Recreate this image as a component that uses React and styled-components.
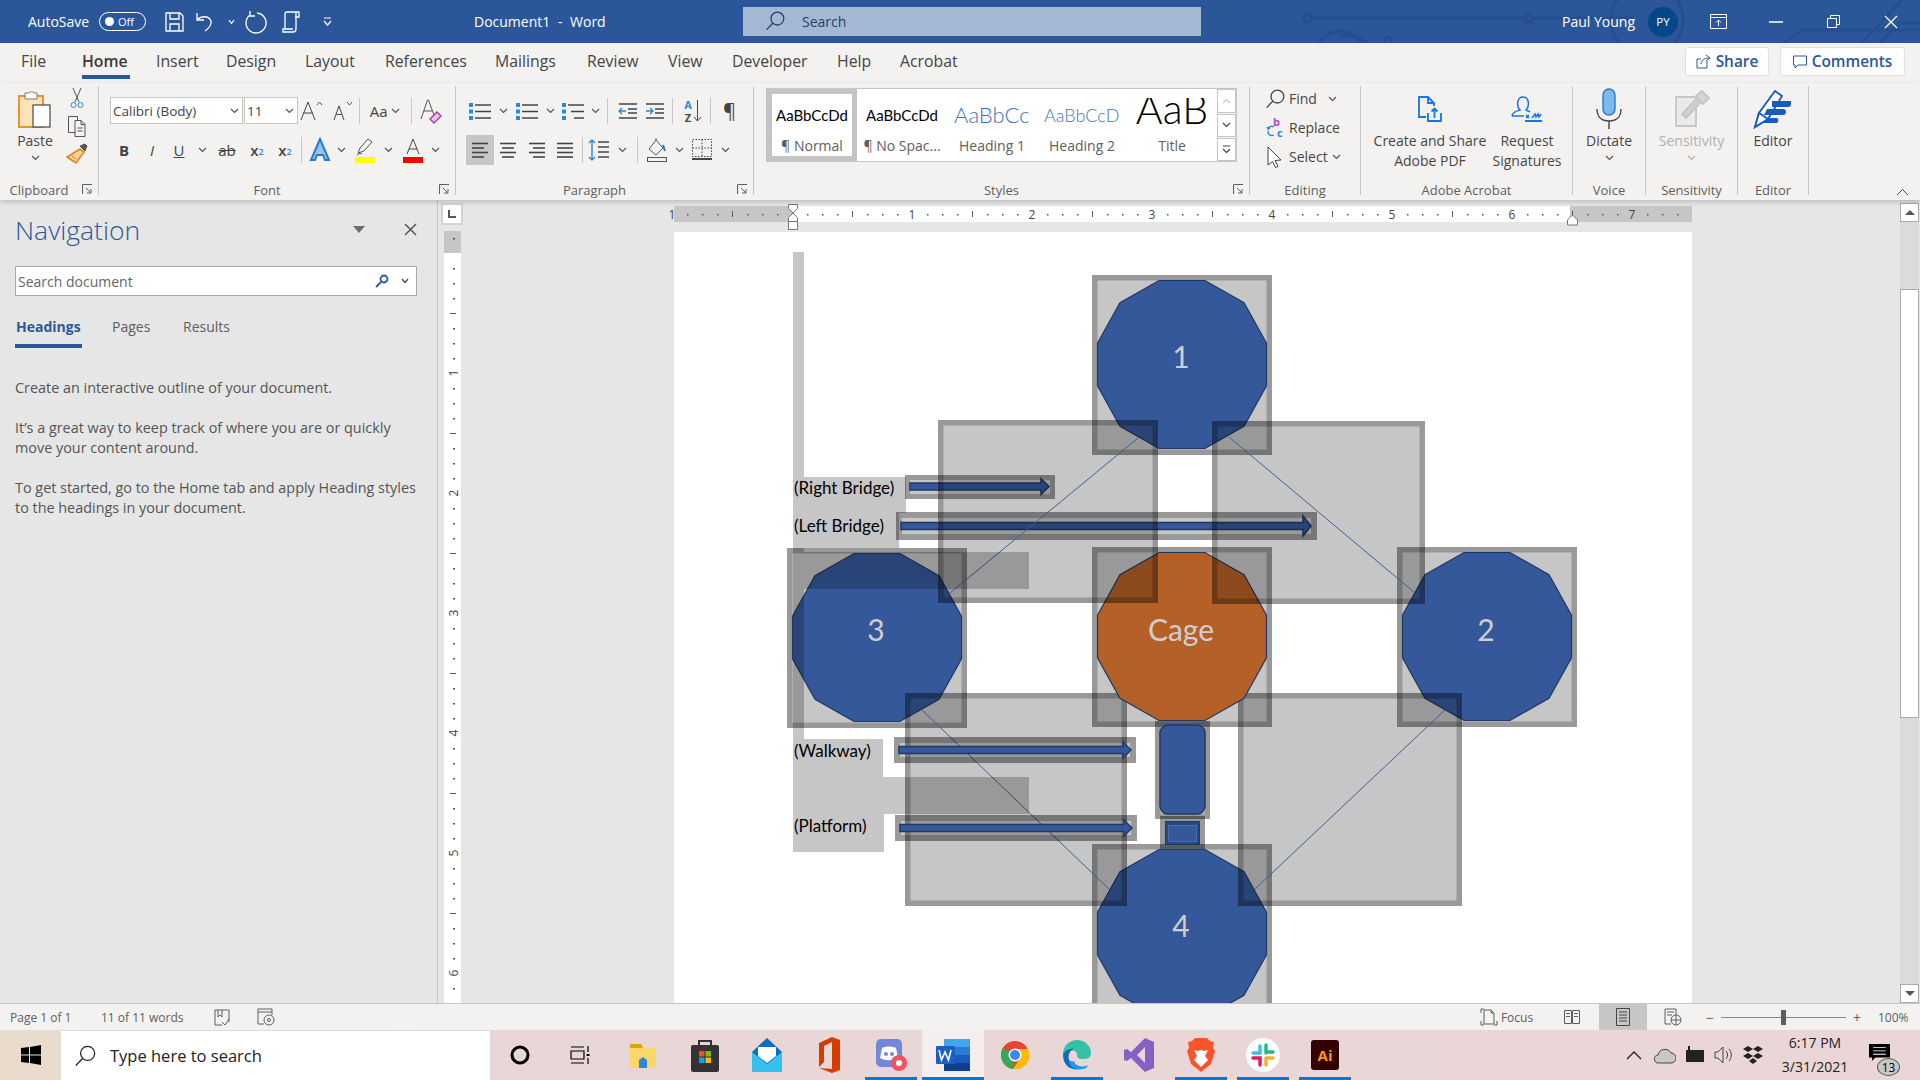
import React from 'react';
import styled, { createGlobalStyle } from 'styled-components';

const GlobalStyle = createGlobalStyle`
  html, body { margin: 0; padding: 0; width: 1920px; height: 1080px; overflow: hidden; }
  body { font-family: "Open Sans", "Noto Sans", sans-serif; color: #444; }
  * { box-sizing: border-box; }
  svg { display: block; flex: none; }
`;

const Page = styled.div`
  width: 1920px;
  height: 1080px;
  display: flex;
  flex-direction: column;
`;

/* ---------- title bar ---------- */
const TitleBar = styled.div`
  position: relative;
  height: 43px;
  flex: none;
  display: flex;
  align-items: center;
  background: #2b579a;
  color: #fff;
  font-size: 14px;
`;
const Circuit = styled.svg`
  position: absolute;
  left: 0;
  top: 0;
`;
const QuickAccess = styled.div`
  position: relative;
  width: 474px;
  padding-left: 28px;
  display: flex;
  align-items: center;
`;
const AutoSaveLabel = styled.span`
  width: 71px;
`;
const Toggle = styled.div`
  width: 47px;
  height: 19px;
  border: 1px solid #fff;
  border-radius: 10px;
  display: flex;
  align-items: center;
  padding-left: 5px;
  gap: 4px;
  font-size: 11px;
  margin-right: 19px;
  &::before {
    content: "";
    width: 9px;
    height: 9px;
    border-radius: 50%;
    background: #fff;
  }
`;
const QuickBtn = styled.div`
  width: ${p => p.$w}px;
  display: flex;
  justify-content: center;
  align-items: center;
`;
const DocTitle = styled.div`
  position: relative;
  width: 269px;
  word-spacing: 4px;
`;
const SearchBox = styled.div`
  position: relative;
  width: 458px;
  height: 29px;
  margin-top: -1px;
  background: #a4b8d2;
  color: #20406f;
  display: flex;
  align-items: center;
  padding-left: 22px;
  gap: 17px;
`;
const UserArea = styled.div`
  position: relative;
  margin-left: auto;
  display: flex;
  align-items: center;
`;
const UserName = styled.span`
  width: 86px;
`;
const Avatar = styled.div`
  width: 30px;
  height: 30px;
  border-radius: 50%;
  background: #05478a;
  font-size: 11.5px;
  display: flex;
  align-items: center;
  justify-content: center;
  margin-right: 12px;
`;
const WinBtn = styled.div`
  width: 57.5px;
  display: flex;
  justify-content: center;
`;

/* ---------- ribbon tabs ---------- */
const TabRow = styled.div`
  height: 40px;
  flex: none;
  background: #f3f2f1;
  display: flex;
  align-items: flex-start;
  padding-left: 21px;
  position: relative;
`;
const Tab = styled.div`
  width: ${p => p.$w}px;
  height: 36px;
  flex: none;
  line-height: 37px;
  font-size: 15.8px;
  color: #444;
  white-space: nowrap;
  ${p => p.$active && `
    font-weight: 600;
    color: #3b3a39;
    &::after {
      content: "";
      display: block;
      width: 48px;
      height: 4px;
      margin-top: -5px;
      background: #2b579a;
    }
  `}
`;
const ShareArea = styled.div`
  margin-left: auto;
  display: flex;
  gap: 11px;
  padding: 4px 15px 0 0;
`;
const ShareBtn = styled.div`
  width: ${p => p.$w}px;
  height: 29px;
  background: #fff;
  border: 1px solid #e1dfdd;
  border-radius: 3px;
  color: #2b579a;
  font-weight: 600;
  font-size: 15.4px;
  display: flex;
  align-items: center;
  justify-content: center;
  gap: 5px;
`;

/* ---------- ribbon ---------- */
const Ribbon = styled.div`
  position: relative;
  z-index: 2;
  height: 117px;
  flex: none;
  background: #f3f2f1;
  display: flex;
  align-items: flex-start;
  padding-top: 3px;
  box-shadow: 0 2px 5px rgba(0, 0, 0, 0.18);
`;
const Group = styled.div`
  position: relative;
  width: ${p => p.$w}px;
  height: 109px;
  flex: none;
  display: flex;
  flex-direction: column;
  border-right: 1px solid #c8c6c4;
`;
const GroupBody = styled.div`
  flex: 1;
  display: flex;
  ${p => p.$col && 'flex-direction: column;'}
  padding: ${p => p.$pad || '0'};
`;
const GroupLabel = styled.div`
  height: 8px;
  line-height: 6px;
  text-align: center;
  font-size: 13px;
  color: #605e5c;
  white-space: nowrap;
  padding-right: ${p => p.$pr || 0}px;
`;
const Launcher = styled.svg`
  position: absolute;
  right: 5px;
  bottom: 0;
`;
const BigBtn = styled.div`
  width: ${p => p.$w}px;
  flex: none;
  display: flex;
  flex-direction: column;
  align-items: center;
  text-align: center;
  font-size: 14px;
  line-height: 20px;
  color: ${p => (p.$off ? '#b1b0ae' : '#484644')};
  white-space: nowrap;
`;
const IconSlot = styled.div`
  height: 45px;
  display: flex;
  align-items: center;
  justify-content: center;
`;
const ChevronSlot = styled.div`
  height: 14px;
  display: flex;
  justify-content: center;
  align-items: center;
`;
const Stack = styled.div`
  display: flex;
  flex-direction: column;
  align-items: center;
  gap: 6px;
  padding-top: 1px;
  margin-left: -4px;
`;
const ToolRow = styled.div`
  display: flex;
  align-items: center;
  height: ${p => p.$h || 30}px;
  margin-top: ${p => p.$mt || 0}px;
`;
const Tool = styled.div`
  width: ${p => p.$w}px;
  height: 30px;
  flex: none;
  display: flex;
  align-items: center;
  justify-content: center;
  color: #444;
  font-size: ${p => p.$fs || 14}px;
  font-weight: ${p => p.$fw || 400};
  ${p => p.$on && 'background: #c8c6c4;'}
`;
const ToolSep = styled.div`
  width: 1px;
  height: 26px;
  flex: none;
  background: #c8c6c4;
  margin: 0 ${p => p.$m || 3}px;
`;
const Combo = styled.div`
  width: ${p => p.$w}px;
  height: 27px;
  flex: none;
  background: #fff;
  border: 1px solid #c8c6c4;
  margin-right: ${p => p.$mr || 0}px;
  display: flex;
  align-items: center;
  justify-content: space-between;
  padding: 0 3px 0 2px;
  font-size: 13.5px;
  color: #444;
`;

/* styles gallery */
const Gallery = styled.div`
  margin: 2px 0 0 12px;
  width: 471px;
  height: 74px;
  display: flex;
  background: #fff;
  border: 1px solid #c8c6c4;
`;
const StyleItem = styled.div`
  width: 90px;
  height: 72px;
  flex: none;
  display: flex;
  flex-direction: column;
  align-items: center;
  ${p => p.$on ? 'border: 5px solid #c4c4c4;' : 'padding: 5px;'}
`;
const StylePreview = styled.div`
  width: 76px;
  height: 34px;
  overflow: hidden;
  margin-top: 4px;
  display: flex;
  justify-content: ${p => (p.$fit ? 'center' : 'flex-start')};
  align-items: ${p => (p.$lh ? 'flex-start' : 'center')};
  white-space: nowrap;
  font-family: Lato, sans-serif;
  font-size: ${p => p.$fs}px;
  font-weight: ${p => (p.$lh || p.$light ? 300 : 400)};
  line-height: ${p => p.$lh || 34}px;
  color: ${p => p.$c || '#000'};
`;
const StyleName = styled.div`
  font-size: 14px;
  line-height: 16px;
  margin-top: 6px;
  color: #605e5c;
  white-space: nowrap;
`;
const GalleryScroll = styled.div`
  margin-left: auto;
  width: 19px;
  display: flex;
  flex-direction: column;
  gap: 1px;
  background: #f3f2f1;
`;
const ScrollBtn = styled.div`
  height: ${p => p.$h}px;
  background: #fff;
  border: 1px solid #c8c6c4;
  display: flex;
  align-items: center;
  justify-content: center;
`;
const EditRow = styled.div`
  height: 29px;
  display: flex;
  align-items: center;
  gap: 4px;
  font-size: 14px;
  color: #484644;
  padding-left: 15px;
  &:first-child { margin-top: -2px; }
`;
const CollapseBtn = styled.svg`
  position: absolute;
  right: 11px;
  bottom: 4px;
`;

/* ---------- main ---------- */
const Main = styled.div`
  height: 803px;
  flex: none;
  display: flex;
  background: #e6e6e6;
  overflow: hidden;
`;
const NavPane = styled.div`
  width: 438px;
  flex: none;
  border-right: 1px solid #c8c6c4;
  padding: 0 20px 0 15px;
`;
const NavHead = styled.div`
  height: 62px;
  display: flex;
  align-items: center;
  padding-bottom: 3px;
`;
const NavTitle = styled.div`
  font-size: 26.5px;
  font-weight: 300;
  color: #2b579a;
  flex: 1;
`;
const NavSearch = styled.div`
  height: 30px;
  width: 402px;
  margin-top: 4px;
  background: #fff;
  border: 1px solid #ababab;
  display: flex;
  align-items: center;
  justify-content: space-between;
  padding: 0 7px 0 2px;
  font-size: 14px;
  color: #666;
`;
const NavSearchTools = styled.div`
  display: flex;
  align-items: center;
  gap: 12px;
`;
const NavTabs = styled.div`
  display: flex;
  height: 52px;
  align-items: stretch;
  font-size: 14px;
`;
const NavTab = styled.div`
  width: ${p => p.$w}px;
  padding-top: 21px;
  padding-left: ${p => p.$pl || 0}px;
  color: ${p => (p.$on ? '#2b579a' : '#605e5c')};
  font-weight: ${p => (p.$on ? 700 : 400)};
  ${p => p.$on && 'border-bottom: 4px solid #2b579a;'}
`;
const NavBody = styled.div`
  margin-top: 30px;
  font-size: 14.4px;
  line-height: 20px;
  color: #555;
  p { margin: 0 0 20px; white-space: pre; }
`;
const NavTool = styled.div`
  width: ${p => p.$w}px;
  margin-right: ${p => p.$mr || 0}px;
  display: flex;
  justify-content: center;
`;
const VRulerCol = styled.div`
  width: 27px;
  flex: none;
  display: flex;
  flex-direction: column;
  align-items: center;
  padding-left: 1px;
`;
const RulerTab = styled.div`
  width: 22px;
  height: 22px;
  margin-top: 3px;
  margin-bottom: 6px;
  background: #fff;
  border: 2px solid #d4d4d4;
  display: flex;
  align-items: center;
  justify-content: center;
  flex: none;
`;
const DocArea = styled.div`
  flex: 1;
  display: flex;
  flex-direction: column;
  align-items: center;
  padding-top: 6px;
  min-width: 0;
`;
const SheetGap = styled.div`
  height: 10px;
  flex: none;
`;
const Sheet = styled.div`
  width: 1018px;
  height: 771px;
  flex: none;
  background: #fff;
  overflow: hidden;
`;
const Scrollbar = styled.div`
  width: 20px;
  flex: none;
  display: flex;
  flex-direction: column;
  padding: 3px 1px 0 0;
  background: linear-gradient(90deg, #dbdbdb 19px, #e6e6e6 19px);
`;
const ScrollEnd = styled.div`
  height: 19px;
  flex: none;
  background: #fff;
  border: 1px solid #ababab;
  display: flex;
  align-items: center;
  justify-content: center;
`;
const ScrollThumb = styled.div`
  height: 429px;
  margin-top: 67px;
  margin-bottom: auto;
  background: #fff;
  border: 1px solid #ababab;
`;

/* ---------- status bar ---------- */
const StatusBar = styled.div`
  height: 27px;
  flex: none;
  background: #f3f2f1;
  border-top: 1px solid #c8c6c4;
  display: flex;
  align-items: center;
  font-size: 12px;
  color: #605e5c;
  position: relative;
  z-index: 1;
`;
const StatusItem = styled.div`
  width: ${p => p.$w}px;
  height: 100%;
  flex: none;
  margin-left: ${p => p.$ml || 0}px;
  padding-left: ${p => p.$pl || 0}px;
  display: flex;
  align-items: center;
  justify-content: ${p => (p.$left ? 'flex-start' : 'center')};
  gap: 3px;
  font-size: ${p => p.$fs || 12}px;
  ${p => p.$on && 'background: #c8c6c4;'}
`;
const StatusRight = styled.div`
  margin-left: auto;
  height: 100%;
  display: flex;
  align-items: center;
`;
const ZoomSlider = styled.div`
  position: relative;
  width: 125px;
  height: 1px;
  background: #8a8886;
  &::after {
    content: "";
    position: absolute;
    left: 60px;
    top: -7px;
    width: 5px;
    height: 15px;
    background: #605e5c;
  }
`;

/* ---------- task bar ---------- */
const TaskBar = styled.div`
  height: 50px;
  flex: none;
  display: flex;
  align-items: center;
  background: linear-gradient(90deg, #e9dccd 0, #e8d6d6 25%, #ead6d6 100%);
  color: #000;
`;
const StartBtn = styled.div`
  width: 61px;
  display: flex;
  justify-content: center;
`;
const TaskSearch = styled.div`
  width: 429px;
  height: 49px;
  margin-top: 1px;
  background: #fff;
  display: flex;
  align-items: center;
  padding-left: 13px;
  gap: 14px;
  font-size: 16.5px;
  color: #222;
`;
const TaskIcon = styled.div`
  position: relative;
  width: ${p => p.$w || 62}px;
  height: 50px;
  flex: none;
  display: flex;
  align-items: center;
  justify-content: center;
  ${p => p.$bright && 'background: #f5eeee;'}
  ${p => p.$open && `
    &::after {
      content: "";
      position: absolute;
      left: ${p.$bright ? 0 : 5}px;
      right: ${p.$bright ? 0 : 5}px;
      bottom: 0;
      height: 3px;
      background: #0078d7;
    }
  `}
`;
const Tray = styled.div`
  margin-left: auto;
  display: flex;
  align-items: center;
`;
const TrayIcon = styled.div`
  width: ${p => p.$w}px;
  display: flex;
  justify-content: center;
`;
const Clock = styled.div`
  width: 90px;
  text-align: center;
  font-size: 14px;
  line-height: 24px;
  color: #222;
`;
const NotifyBtn = styled.div`
  position: relative;
  width: 60px;
  height: 50px;
  padding: 14px 0 0 9px;
`;
const NotifyBadge = styled.div`
  position: absolute;
  left: 17px;
  top: 28px;
  width: 23px;
  height: 18px;
  border-radius: 50%;
  background: #c8c8c8;
  border: 1px solid #555;
  font-size: 12px;
  display: flex;
  align-items: center;
  justify-content: center;
`;

/* ---------- small drawings ---------- */
const Ico = ({ w = 20, h = 20, c = 'currentColor', sw = 1, children }) => (
  <svg width={w} height={h} viewBox={`0 0 ${w} ${h}`} fill="none" stroke={c} strokeWidth={sw}>{children}</svg>
);
const Chev = ({ c = '#555', w = 9 }) => (
  <Ico w={w} h={6} c={c} sw={1.2}><path d={`M1 1l${w / 2 - 1} 3.5L${w - 1} 1`} /></Ico>
);
const LaunchIcon = () => (
  <Launcher width="11" height="11" viewBox="0 0 11 11" fill="none" stroke="#605e5c">
    <path d="M.5 10V.5H10M4 4l5 5M9 5v4H5" />
  </Launcher>
);
const Lines = ({ rows, w = 20, c = '#444' }) => (
  <Ico w={w} h={20} c={c} sw={1.6}>
    {rows.map(([x1, x2], i) => <path key={i} d={`M${x1} ${3.5 + i * 4.5}H${x2}`} />)}
  </Ico>
);
const Dots = ({ n, blue = '#2b88d8' }) => (
  <Ico w={24} h={20} c="#444" sw={1.5}>
    {n.map((x, i) => (
      <g key={i}>
        <rect x="1" y={2 + i * 6.5} width="4" height="4" fill={blue} stroke="none" />
        <path d={`M${x} ${4 + i * 6.5}H23`} />
      </g>
    ))}
  </Ico>
);

const PasteIcon = () => (
  <Ico w={36} h={40}>
    <rect x="2" y="7" width="24" height="31" fill="#fde3b8" stroke="#e8952c" strokeWidth="2" />
    <path d="M8 7V4h4a3 3 0 0 1 5 0h3v6H8z" fill="#fff" stroke="#777" />
    <rect x="16" y="16" width="17" height="22" fill="#fff" stroke="#555" strokeWidth="1.3" />
  </Ico>
);
const CutIcon = () => (
  <Ico w={14} h={22} c="#555">
    <path d="M3 1l6 14M11 1L5 15" />
    <circle cx="3.5" cy="18" r="2.5" stroke="#2b88d8" /><circle cx="10.5" cy="18" r="2.5" stroke="#2b88d8" />
  </Ico>
);
const CopyIcon = () => (
  <Ico w={20} h={22} c="#555">
    <path d="M1.5 1.5h9v16h-9z" fill="#f3f2f1" /><path d="M8 5.5h6l4 4v12H8z" fill="#f3f2f1" /><path d="M14 5.5v4h4M10.500 13h5M10.500 16h5" />
  </Ico>
);
const BrushIcon = () => (
  <Ico w={22} h={22}>
    <path d="M14 3l5-2 2 2-2 5z" fill="#555" stroke="#555" />
    <path d="M14 6l4 3-8 11-9-6z" fill="#fbd39a" stroke="#e8821c" strokeWidth="1.6" />
    <path d="M6 13l4 3M3 16l4 2" stroke="#e8821c" />
  </Ico>
);
const ClearIcon = () => (
  <Ico w={24} h={26} c="#555">
    <path d="M2 21L8.500 2h1L15 17M5 13h8" />
    <path d="M11 21l7-7 4 4-7 7z" fill="#e9c5ea" stroke="#a43ca8" strokeWidth="1.4" />
  </Ico>
);
const GrowIcon = ({ up }) => (
  <Ico w={26} h={22} c="#444">
    <path d={up ? 'M1 20L8 2l7 18M4 13h8' : 'M5 20l5-14 5 14M7.500 14.500h5'} />
    <path d={up ? 'M17 5l2.500-3L22 5' : 'M18 2l2.500 3L23 2'} stroke="#2b579a" />
  </Ico>
);
const TextEffect = () => (
  <Ico w={22} h={26}>
    <path d="M2 23L11 2l9 21h-4l-2-5H8l-2 5z" fill="#8fc4ee" stroke="#2b78c8" strokeWidth="2" />
  </Ico>
);
const Highlight = () => (
  <Ico w={22} h={26} c="#555">
    <path d="M4 16l2-5 8-9 4 3-8 9z" fill="#f3f2f1" /><path d="M3 18l3-2 2 1" />
    <rect x="1" y="20" width="20" height="6" fill="#ff0" stroke="none" />
  </Ico>
);
const FontColor = () => (
  <Ico w={22} h={26} c="#444">
    <path d="M5 17L11 2l6 15M7 12h8" />
    <rect x="1" y="20" width="20" height="6" fill="#f00" stroke="none" />
  </Ico>
);
const Indent = ({ flip }) => (
  <Ico w={22} h={20} c="#444" sw={1.4}>
    <path d="M2 3h18M2 17h18M11 8h9M11 12h9" />
    <path d={flip ? 'M2 10h7M6 7l3 3-3 3' : 'M2 10h7M5 7l-3 3 3 3'} stroke="#2b88d8" />
  </Ico>
);
const SortWrap = styled.div`
  display: flex;
  align-items: center;
  gap: 1px;
`;
const SortLetters = styled.span`
  font-size: 11px;
  line-height: 13px;
  text-align: center;
  font-weight: 700;
  color: #2b88d8;
  span { color: #444; }
`;
const SortIcon = () => (
  <SortWrap>
    <SortLetters>A<br /><span>Z</span></SortLetters>
    <Ico w={9} h={24} c="#444"><path d="M4.500 1v21M1 18l3.500 4L8 18" /></Ico>
  </SortWrap>
);
const Script = styled.span`
  font-size: 9px;
  color: #2b88d8;
`;
const Spacing = () => (
  <Ico w={22} h={24} c="#444" sw={1.4}>
    <path d="M10 4h11M10 9h11M10 14h11M10 19h11" />
    <path d="M4 2v20M1 5l3-3 3 3M1 19l3 3 3-3" stroke="#2b88d8" />
  </Ico>
);
const Shading = () => (
  <Ico w={22} h={26} c="#555">
    <path d="M3 12L10 3l7 8-7 7z" fill="#f3f2f1" /><path d="M10 3V1" /><path d="M17 8l2 6" stroke="#2b78c8" strokeWidth="2" />
    <rect x="1.500" y="20.500" width="19" height="4" />
  </Ico>
);
const Borders = () => (
  <Ico w={22} h={24} c="#444">
    <path d="M1.500 1.500h19v17h-19zM11 1.500v17M1.500 10h19" strokeDasharray="1.500 1.500" />
    <path d="M1 21h20" strokeWidth="2" />
  </Ico>
);
const ReplaceIcon = () => (
  <Ico w={20} h={20} c="#2b88d8" sw={1.4}>
    <text x="8" y="8" fontSize="11" fontWeight="700" fill="#b146c2" stroke="none" fontFamily="Open Sans">b</text>
    <text x="12" y="19" fontSize="11" fontWeight="700" fill="#2b88d8" stroke="none" fontFamily="Open Sans">c</text>
    <path d="M9 9a4 4 0 0 0-6 2l-1-2m1 2l2-1M3 13a4 4 0 0 0 6 4" />
  </Ico>
);
const SearchGlass = ({ c = '#444', s = 20 }) => (
  <Ico w={s} h={s} c={c} sw={1.3}>
    <circle cx={s * 0.62} cy={s * 0.38} r={s * 0.32} /><path d={`M${s * 0.4} ${s * 0.6}L${s * 0.08} ${s * 0.93}`} />
  </Ico>
);
const CursorIcon = () => (
  <Ico w={20} h={22} c="#444">
    <path d="M3 1l13 13-6 .5 3 6-2.500 1-3-6L3 19z" fill="#fff" />
  </Ico>
);
const CreatePdf = () => (
  <Ico w={26} h={28} c="#1473e6" sw={1.8}>
    <path d="M9 22H2V2h9l6 6v3M11 2v6h6" /><path d="M11 18v8h13v-8M17.500 23v-9M14.500 16.500l3-3 3 3" />
  </Ico>
);
const SignIcon = () => (
  <Ico w={34} h={28} c="#1473e6" sw={1.5}>
    <path d="M2 21c0-4 5-5 8-6-4-4-3-13 3-13s7 9 3 13c1 1 3 1 4 2M2 21h12" />
    <path d="M16 20l3 3m0-3l-3 3M22 23l3-4 1 3 2-3 1 3 2-3" />
    <path d="M15 26h17" strokeWidth="2" />
  </Ico>
);
const MicIcon = () => (
  <Ico w={28} h={42} c="#444" sw={1.4}>
    <rect x="8" y="1" width="12" height="26" rx="6" fill="#7cb8ea" stroke="#2b78c8" />
    <path d="M2 21c0 8 5 12 12 12s12-4 12-12M14 33v8" />
  </Ico>
);
const SensitivityIcon = () => (
  <Ico w={36} h={38} c="#c8c6c4" sw={1.8}>
    <path d="M2 7h20v29H2z" fill="#eaeaea" />
    <path d="M8 24L22 9l4 4-14 15z" fill="#d0d0d0" />
    <path d="M22 6l6-5 7 7-6 6z" fill="#d5d5d5" />
  </Ico>
);
const EditorIcon = () => (
  <Ico w={40} h={40} c="#185abd" sw={1.8}>
    <path d="M2 38l4-14L22 2l7 5-14 23z" fill="#fff" />
    <path d="M19 12h19v3a3 3 0 0 1-3 3H19zM14 20h16a3 3 0 0 1 0 6H11zM9 29h15a3 3 0 0 1 0 5H7z" fill="#185abd" stroke="none" />
    <path d="M2 38l4-14 9 6z" fill="#fff" />
  </Ico>
);
const WinLogo = () => (
  <svg width="20" height="20" viewBox="0 0 20 20" fill="#000">
    <path d="M0 3l8-1v7.500H0zM9 2l11-2v9.500H9zM0 10.500h8V18l-8-1zM9 10.500h11V20L9 18z" />
  </svg>
);

/* task bar apps */
const AppFolder = () => (
  <svg width="28" height="28" viewBox="0 0 28 28"><path d="M1 3h11l2 3v4H1z" fill="#e0a010" /><path d="M1 7h26v20H1z" fill="#fbd668" /><path d="M10 27v-8l4-3 4 3v8z" fill="#2b88d8" /></svg>
);
const AppStore = () => (
  <svg width="28" height="34" viewBox="0 0 28 34">
    <path d="M8 8V3h12v5" fill="none" stroke="#333" strokeWidth="2" /><rect y="7" width="28" height="27" rx="2" fill="#333" />
    <rect x="8" y="13" width="5.500" height="5.500" fill="#f25022" /><rect x="14.500" y="13" width="5.500" height="5.500" fill="#7fba00" />
    <rect x="8" y="19.500" width="5.500" height="5.500" fill="#00a4ef" /><rect x="14.500" y="19.500" width="5.500" height="5.500" fill="#ffb900" />
  </svg>
);
const AppMail = () => (
  <svg width="30" height="34" viewBox="0 0 30 34">
    <path d="M0 14L15 0l15 14v20H0z" fill="#0a6fc2" /><path d="M6 9h18v9l-9 7-9-7z" fill="#fff" /><path d="M0 14l15 12 15-12v20H0z" fill="#35c0f0" />
  </svg>
);
const AppOffice = () => (
  <svg width="24" height="36" viewBox="0 0 24 36">
    <path d="M2 6L15 0l8 3v30l-8 3-13-5 13 1V5L7 9v16l-5 5z" fill="#d83b01" />
  </svg>
);
const AppDiscord = () => (
  <svg width="34" height="34" viewBox="0 0 34 34">
    <rect x="2" y="1" width="26" height="28" rx="5" fill="#7289da" /><path d="M8 10c4-2 10-2 14 0l2 10c-5 3-13 3-18 0z" fill="#fff" />
    <circle cx="12" cy="16" r="2" fill="#7289da" /><circle cx="18" cy="16" r="2" fill="#7289da" />
    <circle cx="25" cy="25" r="8" fill="#f0555f" /><circle cx="25" cy="25" r="3" fill="#fff" />
  </svg>
);
const AppWord = () => (
  <svg width="34" height="32" viewBox="0 0 34 32">
    <rect x="8" width="26" height="8" fill="#41a5ee" /><rect x="8" y="8" width="26" height="8" fill="#2b7cd3" /><rect x="8" y="16" width="26" height="8" fill="#185abd" /><rect x="8" y="24" width="26" height="8" fill="#103f91" />
    <rect y="7" width="19" height="18" rx="1" fill="#1a5fc4" />
    <path d="M3 11l2.500 10 3.500-8 3.500 8L15 11" fill="none" stroke="#fff" strokeWidth="1.6" />
  </svg>
);
const AppChrome = () => (
  <svg width="30" height="30" viewBox="0 0 30 30">
    <circle cx="15" cy="15" r="14" fill="#ea4335" /><path d="M15 15L3 8a14 14 0 0 0 10 21z" fill="#34a853" /><path d="M15 9h13a14 14 0 0 1-15 20l7-11z" fill="#fbbc05" />
    <circle cx="15" cy="15" r="6.500" fill="#fff" /><circle cx="15" cy="15" r="5" fill="#4285f4" />
  </svg>
);
const AppEdge = () => (
  <svg width="30" height="32" viewBox="0 0 30 32">
    <path d="M1 16C1 6 8 1 15 1c8 0 14 6 14 13 0 5-4 6-8 6-5 0-6-2-6-4 0-4-5-6-8-3-2 2-4 3-6 3z" fill="#35c1a5" />
    <path d="M1 16c2-5 7-7 11-6-5 2-6 6-5 11 1 5 5 8 10 9C9 32 1 26 1 16z" fill="#0f6cbd" />
    <path d="M7 21c0 7 8 12 17 8l3-3c-7 3-14 1-15-4-2 1-3 0-5-1z" fill="#1b9de2" />
  </svg>
);
const AppVS = () => (
  <svg width="30" height="34" viewBox="0 0 30 34">
    <path d="M21 0l9 4v26l-9 4L7 20l-4 3-3-1V12l3-1 4 3zM21 9l-8 8 8 8z" fill="#8661c5" fillRule="evenodd" />
  </svg>
);
const AppBrave = () => (
  <svg width="28" height="34" viewBox="0 0 28 34">
    <path d="M8 0h12l3 3 4 1-1 6 2 3-4 13-10 8-10-8L0 13l2-3-1-6 4-1z" fill="#fb542b" />
    <path d="M7 12l4 1 3-1 3 1 4-1-3 6 3 4-7 7-7-7 3-4z" fill="#fff" />
  </svg>
);
const AppSlack = () => (
  <svg width="34" height="34" viewBox="0 0 34 34">
    <circle cx="17" cy="17" r="17" fill="#fff" />
    <path d="M14 8v7H7" stroke="#36c5f0" strokeWidth="3.500" fill="none" strokeLinecap="round" />
    <path d="M20 7v8M20 14h7" stroke="#2eb67d" strokeWidth="3.500" fill="none" strokeLinecap="round" />
    <path d="M20 27v-7M20 20h7" stroke="#ecb22e" strokeWidth="3.500" fill="none" strokeLinecap="round" />
    <path d="M14 27v-7H7" stroke="#e01e5a" strokeWidth="3.500" fill="none" strokeLinecap="round" />
  </svg>
);
const AiBadge = styled.div`
  width: 28px;
  height: 30px;
  border-radius: 3px;
  background: #330000;
  color: #ff9a00;
  font: 700 15px/30px "Open Sans", sans-serif;
  text-align: center;
`;

/* ---------- rulers ---------- */
const HRuler = () => {
  const ticks = [];
  for (let x = 672, i = 0; x < 1692; x += 15, i++) {
    const inch = (x - 792) / 120;
    if (i % 8 === 0) {
      if (inch !== 0) ticks.push(<text key={x} x={x} y="218.500" textAnchor="middle" fontSize="12" fill="#444" fontFamily="Open Sans">{Math.abs(inch)}</text>);
    } else if (i % 4 === 0) ticks.push(<rect key={x} x={x} y="211" width="1" height="6" fill="#555" />);
    else ticks.push(<rect key={x} x={x} y="214" width="1.500" height="1.500" fill="#555" />);
  }
  return (
    <svg width="1018" height="16" viewBox="674 206 1018 16" style={{ overflow: 'visible' }}>
      <rect x="674" y="206" width="1018" height="16" fill="#c6c6c6" />
      <rect x="793" y="206" width="777" height="16" fill="#fff" />
      {ticks}
      <path d="M788.500 204.500h9v4l-4.500 4.500-4.500-4.500z" fill="#fff" stroke="#777" />
      <path d="M793 213l4.500 4.500v4h-9v-4z" fill="#fff" stroke="#777" />
      <rect x="788.500" y="221.500" width="9" height="8" fill="#fff" stroke="#777" />
      <path d="M1572.500 215l5 5v5h-10v-5z" fill="#fff" stroke="#777" />
    </svg>
  );
};
const VRuler = () => {
  const ticks = [];
  for (let y = 238, i = 7; y < 1003; y += 15, i++) {
    if (i % 8 === 0) {
      if (y !== 253) ticks.push(<text key={y} x="0" y="0" transform={`translate(456.500 ${y}) rotate(-90)`} textAnchor="middle" fontSize="12" fill="#444" fontFamily="Open Sans">{(y - 253) / 120}</text>);
    } else if (i % 4 === 0) ticks.push(<rect key={y} x="449" y={y} width="6" height="1" fill="#555" />);
    else ticks.push(<rect key={y} x="452" y={y} width="2" height="1.500" fill="#555" />);
  }
  return (
    <svg width="17" height="772" viewBox="443 231 17 772">
      <rect x="443" y="231" width="17" height="772" fill="#fff" />
      <rect x="443" y="231" width="17" height="22" fill="#c6c6c6" />
      {ticks}
    </svg>
  );
};

/* ---------- the drawing on the page ---------- */
const DODECA = [[.364, 0], [.636, 0], [.867, .132], [1, .373], [1, .627], [.867, .868], [.636, 1], [.364, 1], [.133, .868], [0, .627], [0, .373], [.133, .132]];
const BLUE = '#35589a';
const NAVY = '#203864';
const SHADE = 'rgba(0,0,0,0.224)';

const SelBox = ({ x, y, w, h, bw = 5.5 }) => (
  <g>
    <rect x={x} y={y} width={w} height={h} fill={SHADE} />
    <rect x={x + bw / 2} y={y + bw / 2} width={w - bw} height={h - bw} fill="none" stroke={SHADE} strokeWidth={bw} />
  </g>
);
const Dodeca = ({ x, y, fill = BLUE }) => (
  <polygon points={DODECA.map(([a, b]) => `${x + a * 169},${y + b * 168}`).join(' ')} fill={fill} stroke={NAVY} strokeWidth="1.200" />
);
const Arrow = ({ x1, x2, y, hh = 8 }) => (
  <polygon points={`${x1},${y - 3.500} ${x2 - 8},${y - 3.500} ${x2 - 8},${y - hh} ${x2},${y} ${x2 - 8},${y + hh} ${x2 - 8},${y + 3.500} ${x1},${y + 3.500}`} fill={BLUE} stroke={NAVY} strokeWidth="1.500" />
);
const Wire = ({ d }) => <path d={d} stroke="#3e5f9c" strokeWidth="1" fill="none" />;
const NodeText = styled.text`
  font-family: Lato, sans-serif;
  font-size: 30px;
  fill: #d0cece;
  text-anchor: middle;
`;
const CaptionText = styled.text`
  font-family: Lato, sans-serif;
  font-size: 17px;
  fill: #000;
`;

const LABEL_BLOCKS = [
  [793, 252, 11, 225], [793, 477, 113, 36], [793, 513, 106, 35], [793, 548, 11, 4], [793, 552, 236, 37],
  [793, 589, 11, 150], [793, 739, 90, 38], [793, 777, 236, 37], [793, 814, 91, 38],
];

const Diagram = () => (
  <svg width="1018" height="771" viewBox="674 232 1018 771">
    <SelBox x={1092} y={275} w={180} h={180} />
    <Dodeca x={1097.5} y={280.500} />
    <SelBox x={1397} y={547} w={180} h={180} />
    <Dodeca x={1402.500} y={552.500} />
    <SelBox x={787} y={548} w={180} h={180} />
    <Dodeca x={792.500} y={553.500} />
    <SelBox x={1092} y={844} w={180} h={180} />
    <Dodeca x={1097.5} y={849.500} />

    <SelBox x={905} y={693} w={222} h={213} />
    <SelBox x={1238} y={693} w={224} h={213} />
    <Wire d="M922 710L1110 890" />
    <Wire d="M1445 710L1254 890" />

    <SelBox x={1092} y={547} w={180} h={180} />
    <Dodeca x={1097.5} y={552.500} fill="#b56026" />

    <SelBox x={1155} y={721} w={55} h={98} />
    <rect x={1160} y={725} width={45} height={89} rx={8} fill={BLUE} stroke={NAVY} strokeWidth="1.500" />
    <SelBox x={1160} y={816} w={45} h={33} />
    <rect x={1165.500} y={821.500} width={34} height={23} fill="#274880" stroke={NAVY} />
    <rect x={1168.500} y={825.500} width={28} height={16} fill={BLUE} stroke="#4a6cab" />

    <SelBox x={905} y={475} w={150} h={24} bw={5} />
    <Arrow x1={910} x2={1049} y={486.500} />
    <SelBox x={896} y={512} w={421} h={28} bw={6} />
    <Arrow x1={901} x2={1311} y={526} hh={10} />
    <SelBox x={894} y={737} w={242} h={26} bw={6} />
    <Arrow x1={899} x2={1131} y={750} />
    <SelBox x={895} y={815} w={242} h={26} bw={6} />
    <Arrow x1={900} x2={1132} y={828} />

    <SelBox x={938} y={420} w={220} h={183} />
    <SelBox x={1212} y={421} w={213} h={183} />
    <Wire d="M1138 438L950 593" />
    <Wire d="M1229 437L1415 593" />

    {LABEL_BLOCKS.map(([x, y, w, h]) => <rect key={`${x}-${y}`} x={x} y={y} width={w} height={h} fill={SHADE} />)}

    <CaptionText x={794} y={494}>(Right Bridge)</CaptionText>
    <CaptionText x={794} y={532}>(Left Bridge)</CaptionText>
    <CaptionText x={794} y={757}>(Walkway)</CaptionText>
    <CaptionText x={794} y={832}>(Platform)</CaptionText>

    <NodeText x={1181} y={368}>1</NodeText>
    <NodeText x={1486} y={641}>2</NodeText>
    <NodeText x={876} y={641}>3</NodeText>
    <NodeText x={1181} y={641}>Cage</NodeText>
    <NodeText x={1181} y={937}>4</NodeText>
  </svg>
);

/* ---------- data ---------- */
const TABS = [['File', 61], ['Home', 74, true], ['Insert', 70], ['Design', 79], ['Layout', 80], ['References', 110], ['Mailings', 92], ['Review', 81], ['View', 64], ['Developer', 105], ['Help', 63], ['Acrobat', 60]];
const STYLES = [
  { name: '¶ Normal', text: 'AaBbCcDd', fs: 15, on: true, fit: true },
  { name: '¶ No Spac...', text: 'AaBbCcDd', fs: 15, fit: true },
  { name: 'Heading 1', text: 'AaBbCcDd', fs: 22, c: '#3f73c4', light: true },
  { name: 'Heading 2', text: 'AaBbCcDd', fs: 18, c: '#3f73c4', light: true },
  { name: 'Title', text: 'AaB', fs: 41, lh: 22, fit: true },
];

const App = () => (
  <Page>
    <GlobalStyle />
    <TitleBar>
      <Circuit width="1920" height="43" viewBox="0 0 1920 43" fill="none" stroke="#244e8f" strokeWidth="3">
        <circle cx="1307" cy="18" r="4" /><path d="M1311 18h217m6 0h100" /><circle cx="1528" cy="18" r="4" />
        <circle cx="1340" cy="55" r="24" /><circle cx="1647" cy="20" r="36" />
        <path d="M1340 35c12 0 22 4 28 8" /><circle cx="1388" cy="41" r="4" />
        <path d="M1784 43l18-13h118M1862 43l40-43M1880 43l20-20h20" />
      </Circuit>
      <QuickAccess>
        <AutoSaveLabel>AutoSave</AutoSaveLabel>
        <Toggle>Off</Toggle>
        <QuickBtn $w={18}>
          <Ico w={19} h={20} sw={1.3} c="#fff"><path d="M1 1h14l3 3v15H1zM5 1v6h9V1M5 19v-7h9v7" /></Ico>
        </QuickBtn>
        <QuickBtn $w={44}>
          <Ico w={20} h={20} sw={1.3} c="#fff"><path d="M2 1v7h7M2 8c3-4 12-5 14 1 1 4-2 7-6 10" /></Ico>
        </QuickBtn>
        <QuickBtn $w={8}><Chev c="#fff" w={7} /></QuickBtn>
        <QuickBtn $w={42}>
          <Ico w={22} h={24} sw={1.3} c="#fff"><path d="M12 3A10 10 0 1 1 5 5M5 1v5h5" /></Ico>
        </QuickBtn>
        <QuickBtn $w={28}>
          <Ico w={20} h={22} sw={1.3} c="#fff"><path d="M4 18V3a2 2 0 0 1 2-2h12v5h-4M15 1v17a3 3 0 0 1-3 3H2v-3h10" /></Ico>
        </QuickBtn>
        <QuickBtn $w={44}>
          <Ico w={9} h={10} sw={1.2} c="#fff"><path d="M1 1h7M1 4l3.500 4L8 4" /></Ico>
        </QuickBtn>
      </QuickAccess>
      <DocTitle>Document1 - Word</DocTitle>
      <SearchBox>
        <SearchGlass c="#20406f" s={20} />
        Search
      </SearchBox>
      <UserArea>
        <UserName>Paul Young</UserName>
        <Avatar>PY</Avatar>
        <WinBtn>
          <Ico w={17} h={15} c="#fff"><path d="M.5.5h16v14H.5zM.5 3.500h16M8.500 12V6M6 8.500l2.500-2.500L11 8.500" /></Ico>
        </WinBtn>
        <WinBtn><Ico w={14} h={2} c="#fff" sw={1.5}><path d="M0 1h14" /></Ico></WinBtn>
        <WinBtn><Ico w={13} h={13} c="#fff"><path d="M.5 3.500h9v9h-9zM3.500 3.500v-3h9v9h-3" /></Ico></WinBtn>
        <WinBtn><Ico w={14} h={14} c="#fff" sw={1.2}><path d="M1 1l12 12M13 1L1 13" /></Ico></WinBtn>
      </UserArea>
    </TitleBar>

    <TabRow>
      {TABS.map(([name, w, on]) => <Tab key={name} $w={w} $active={on}>{name}</Tab>)}
      <ShareArea>
        <ShareBtn $w={84}>
          <Ico w={15} h={15} c="#2b579a"><path d="M11 7v7H1V5h4M5 10c0-3 3-6 8-6M10 1l4 3-4 3" /></Ico>
          Share
        </ShareBtn>
        <ShareBtn $w={125}>
          <Ico w={14} h={14} c="#2b579a"><path d="M.5 1h13v9H5l-3 3v-3H.5z" /></Ico>
          Comments
        </ShareBtn>
      </ShareArea>
    </TabRow>

    <Ribbon>
      <Group $w={99}>
        <GroupBody>
          <BigBtn $w={70}>
            <IconSlot><PasteIcon /></IconSlot>
            Paste
            <ChevronSlot><Chev /></ChevronSlot>
          </BigBtn>
          <Stack>
            <CutIcon /><CopyIcon /><BrushIcon />
          </Stack>
        </GroupBody>
        <GroupLabel $pr={20}>Clipboard</GroupLabel>
        <LaunchIcon />
      </Group>

      <Group $w={357}>
        <GroupBody $col $pad="11px 0 0 11px">
          <ToolRow $h={27}>
            <Combo $w={133} $mr={1}>Calibri (Body)<Chev /></Combo>
            <Combo $w={54}>11<Chev /></Combo>
            <Tool $w={30}><GrowIcon up /></Tool>
            <Tool $w={28}><GrowIcon /></Tool>
            <ToolSep $m={3} />
            <Tool $w={44} $fs={15}>Aa&nbsp;<Chev /></Tool>
            <ToolSep $m={4} />
            <Tool $w={30}><ClearIcon /></Tool>
          </ToolRow>
          <ToolRow $mt={11}>
            <Tool $w={28} $fs={15} $fw={700}>B</Tool>
            <Tool $w={28} $fs={15}><i>I</i></Tool>
            <Tool $w={26} $fs={15}><u>U</u></Tool>
            <Tool $w={20}><Chev /></Tool>
            <Tool $w={30} $fs={15}><s>ab</s></Tool>
            <Tool $w={30} $fs={15} $fw={600}>x<sub><Script>2</Script></sub></Tool>
            <Tool $w={26} $fs={15} $fw={600}>x<sup><Script>2</Script></sup></Tool>
            <ToolSep $m={3} />
            <Tool $w={30}><TextEffect /></Tool>
            <Tool $w={13}><Chev /></Tool>
            <Tool $w={33}><Highlight /></Tool>
            <Tool $w={15}><Chev /></Tool>
            <Tool $w={33}><FontColor /></Tool>
            <Tool $w={12}><Chev /></Tool>
          </ToolRow>
        </GroupBody>
        <GroupLabel $pr={20}>Font</GroupLabel>
        <LaunchIcon />
      </Group>

      <Group $w={298}>
        <GroupBody $col $pad="11px 0 0 10px">
          <ToolRow $h={27}>
            <Tool $w={28}><Dots n={[7, 7, 7]} /></Tool>
            <Tool $w={18}><Chev /></Tool>
            <Tool $w={30}><Dots n={[7, 7, 7]} /></Tool>
            <Tool $w={16}><Chev /></Tool>
            <Tool $w={30}><Dots n={[7, 10, 13]} /></Tool>
            <Tool $w={14}><Chev /></Tool>
            <ToolSep $m={5} />
            <Tool $w={30}><Indent /></Tool>
            <Tool $w={24}><Indent flip /></Tool>
            <ToolSep $m={5} />
            <Tool $w={30}><SortIcon /></Tool>
            <ToolSep $m={2} />
            <Tool $w={33} $fs={20}>¶</Tool>
          </ToolRow>
          <ToolRow $mt={11}>
            <Tool $w={28} $on><Lines rows={[[2, 18], [2, 14], [2, 18], [2, 14]]} /></Tool>
            <Tool $w={28}><Lines rows={[[2, 18], [4, 16], [2, 18], [4, 16]]} /></Tool>
            <Tool $w={29}><Lines rows={[[2, 18], [6, 18], [2, 18], [6, 18]]} /></Tool>
            <Tool $w={28}><Lines rows={[[2, 18], [2, 18], [2, 18], [2, 18]]} /></Tool>
            <ToolSep $m={3} />
            <Tool $w={26}><Spacing /></Tool>
            <Tool $w={21}><Chev /></Tool>
            <ToolSep $m={4} />
            <Tool $w={30}><Shading /></Tool>
            <Tool $w={14}><Chev /></Tool>
            <Tool $w={32}><Borders /></Tool>
            <Tool $w={14}><Chev /></Tool>
          </ToolRow>
        </GroupBody>
        <GroupLabel $pr={20}>Paragraph</GroupLabel>
        <LaunchIcon />
      </Group>

      <Group $w={496}>
        <GroupBody>
          <Gallery>
            {STYLES.map(s => (
              <StyleItem key={s.name} $on={s.on}>
                <StylePreview $fs={s.fs} $c={s.c} $fit={s.fit} $lh={s.lh} $light={s.light}>{s.text}</StylePreview>
                <StyleName>{s.name}</StyleName>
              </StyleItem>
            ))}
            <GalleryScroll>
              <ScrollBtn $h={25}><Ico w={9} h={6} c="#c8c6c4" sw={1.2}><path d="M1 5l3.500-3.500L8 5" /></Ico></ScrollBtn>
              <ScrollBtn $h={23}><Chev c="#444" /></ScrollBtn>
              <ScrollBtn $h={24}><Ico w={9} h={9} c="#444" sw={1.2}><path d="M1 1h7M1 4l3.500 3.500L8 4" /></Ico></ScrollBtn>
            </GalleryScroll>
          </Gallery>
        </GroupBody>
        <GroupLabel>Styles</GroupLabel>
        <LaunchIcon />
      </Group>

      <Group $w={111}>
        <GroupBody $col>
          <EditRow><SearchGlass />Find&nbsp;&nbsp;<Chev /></EditRow>
          <EditRow><ReplaceIcon />Replace</EditRow>
          <EditRow><CursorIcon />Select<Chev /></EditRow>
        </GroupBody>
        <GroupLabel>Editing</GroupLabel>
      </Group>

      <Group $w={212}>
        <GroupBody>
          <BigBtn $w={138}>
            <IconSlot><CreatePdf /></IconSlot>
            Create and Share<br />Adobe PDF
          </BigBtn>
          <BigBtn $w={56}>
            <IconSlot><SignIcon /></IconSlot>
            Request<br />Signatures
          </BigBtn>
        </GroupBody>
        <GroupLabel>Adobe Acrobat</GroupLabel>
      </Group>

      <Group $w={73}>
        <GroupBody>
          <BigBtn $w={72}>
            <IconSlot><MicIcon /></IconSlot>
            Dictate
            <ChevronSlot><Chev /></ChevronSlot>
          </BigBtn>
        </GroupBody>
        <GroupLabel>Voice</GroupLabel>
      </Group>

      <Group $w={92}>
        <GroupBody>
          <BigBtn $w={91} $off>
            <IconSlot><SensitivityIcon /></IconSlot>
            Sensitivity
            <ChevronSlot><Chev c="#b1b0ae" /></ChevronSlot>
          </BigBtn>
        </GroupBody>
        <GroupLabel>Sensitivity</GroupLabel>
      </Group>

      <Group $w={71}>
        <GroupBody>
          <BigBtn $w={70}>
            <IconSlot><EditorIcon /></IconSlot>
            Editor
          </BigBtn>
        </GroupBody>
        <GroupLabel>Editor</GroupLabel>
      </Group>
      <CollapseBtn width="13" height="8" viewBox="0 0 13 8" fill="none" stroke="#444"><path d="M1 7l5.500-5.500L12 7" /></CollapseBtn>
    </Ribbon>

    <Main>
      <NavPane>
        <NavHead>
          <NavTitle>Navigation</NavTitle>
          <NavTool $w={16} $mr={36}>
            <svg width="12" height="7" viewBox="0 0 12 7" fill="#6d6d6d"><path d="M0 0h12L6 7z" /></svg>
          </NavTool>
          <NavTool $w={14}><Ico w={13} h={13} c="#555" sw={1.5}><path d="M1 1l11 11M12 1L1 12" /></Ico></NavTool>
        </NavHead>
        <NavSearch>
          Search document
          <NavSearchTools>
            <Ico w={14} h={14} c="#2b579a" sw={1.8}><circle cx="9" cy="5" r="3.500" /><path d="M6 8l-5 5" /></Ico>
            <Chev c="#444" w={8} />
          </NavSearchTools>
        </NavSearch>
        <NavTabs>
          <NavTab $w={67} $on $pl={1}>Headings</NavTab>
          <NavTab $w={81} $pl={30}>Pages</NavTab>
          <NavTab $w={90} $pl={20}>Results</NavTab>
        </NavTabs>
        <NavBody>
          <p>Create an interactive outline of your document.</p>
          <p>{"It’s a great way to keep track of where you are or quickly\nmove your content around."}</p>
          <p>{"To get started, go to the Home tab and apply Heading styles\nto the headings in your document."}</p>
        </NavBody>
      </NavPane>
      <VRulerCol>
        <RulerTab>
          <Ico w={8} h={8} c="#555" sw={2}><path d="M1 0v7h7" /></Ico>
        </RulerTab>
        <VRuler />
      </VRulerCol>
      <DocArea>
        <HRuler />
        <SheetGap />
        <Sheet><Diagram /></Sheet>
      </DocArea>
      <Scrollbar>
        <ScrollEnd><svg width="10" height="5" viewBox="0 0 10 5" fill="#555"><path d="M5 0l5 5H0z" /></svg></ScrollEnd>
        <ScrollThumb />
        <ScrollEnd><svg width="10" height="5" viewBox="0 0 10 5" fill="#555"><path d="M5 5l5-5H0z" /></svg></ScrollEnd>
      </Scrollbar>
    </Main>

    <StatusBar>
      <StatusItem $w={101} $left $pl={10}>Page 1 of 1</StatusItem>
      <StatusItem $w={107} $left>11 of 11 words</StatusItem>
      <StatusItem $w={28}><Ico w={16} h={17} c="#605e5c"><path d="M1 1h14v12M1 1v15h7M4 1v7l2-2 2 2V1M8 13l3 3 4-6" /></Ico></StatusItem>
      <StatusItem $w={60}><Ico w={18} h={18} c="#605e5c"><path d="M1 1h14v6M1 4h14M1 1v15h6" /><circle cx="12" cy="12" r="5" /><circle cx="12" cy="12" r="1.500" /></Ico></StatusItem>
      <StatusRight>
        <StatusItem $w={61}><Ico w={18} h={18} c="#605e5c"><path d="M4 2h7l3 3v11H4zM11 2v3h3M1 5V1h3M1 13v4h3M17 13v4h-3" /></Ico>Focus</StatusItem>
        <StatusItem $w={36} $ml={17}><Ico w={16} h={16} c="#605e5c"><path d="M.5 1.500h7v13h-7zM8.500 1.500h7v13h-7zM2 4.500h4M2 7.500h4M10 4.500h4M10 7.500h4" /></Ico></StatusItem>
        <StatusItem $w={48} $ml={9} $on><Ico w={14} h={18} c="#444"><path d="M.5.5h13v17H.5zM3 4h8M3 7h8M3 10h8M3 13h8" /></Ico></StatusItem>
        <StatusItem $w={52}><Ico w={18} h={18} c="#605e5c"><path d="M1 1h11v6M3 4h7M3 7h5M1 1v15h6" /><circle cx="12" cy="12" r="5" /><path d="M7 12h10M12 7v10" /></Ico></StatusItem>
        <StatusItem $w={22} $fs={14}>−</StatusItem>
        <ZoomSlider />
        <StatusItem $w={22} $fs={14}>+</StatusItem>
        <StatusItem $w={52} $left $pl={10}>100%</StatusItem>
      </StatusRight>
    </StatusBar>

    <TaskBar>
      <StartBtn><WinLogo /></StartBtn>
      <TaskSearch>
        <SearchGlass c="#222" s={22} />
        Type here to search
      </TaskSearch>
      <TaskIcon $w={60}><Ico w={20} h={20} c="#000" sw={3}><circle cx="10" cy="10" r="8" /></Ico></TaskIcon>
      <TaskIcon $w={62}><Ico w={22} h={20} c="#000" sw={1.2}><path d="M1 2h13M1 18h13M1 6h13v8H1zM18 1v6M18 13v6" /><rect x="16.500" y="9" width="3" height="2" fill="#000" stroke="none" /></Ico></TaskIcon>
      <TaskIcon><AppFolder /></TaskIcon>
      <TaskIcon><AppStore /></TaskIcon>
      <TaskIcon><AppMail /></TaskIcon>
      <TaskIcon><AppOffice /></TaskIcon>
      <TaskIcon $open><AppDiscord /></TaskIcon>
      <TaskIcon $open $bright><AppWord /></TaskIcon>
      <TaskIcon><AppChrome /></TaskIcon>
      <TaskIcon $open><AppEdge /></TaskIcon>
      <TaskIcon><AppVS /></TaskIcon>
      <TaskIcon $open><AppBrave /></TaskIcon>
      <TaskIcon $open><AppSlack /></TaskIcon>
      <TaskIcon $open><AiBadge>Ai</AiBadge></TaskIcon>
      <Tray>
        <TrayIcon $w={32}><Ico w={16} h={10} c="#222" sw={1.3}><path d="M1 9l7-7 7 7" /></Ico></TrayIcon>
        <TrayIcon $w={30}><svg width="22" height="18" viewBox="0 0 22 18" fill="#c8c8c8" stroke="#444"><path d="M5 17a4 4 0 0 1-1-8 7 7 0 0 1 13-2 5 5 0 0 1 0 10z" /></svg></TrayIcon>
        <TrayIcon $w={30}><svg width="20" height="18" viewBox="0 0 20 18" fill="#222"><rect x="1" y="4" width="18" height="12" /><rect x="3" y="0" width="2" height="4" /></svg></TrayIcon>
        <TrayIcon $w={26}><Ico w={18} h={18} c="#444"><path d="M1 6h3l5-5v16l-5-5H1zM12 5c2 2 2 6 0 8M15 3c3 3 3 9 0 12" /></Ico></TrayIcon>
        <TrayIcon $w={34}><svg width="20" height="20" viewBox="0 0 20 20" fill="#222"><path d="M5 1l5 3-5 3-5-3zM15 1l5 3-5 3-5-3zM5 8l5 3-5 3-5-3zM15 8l5 3-5 3-5-3zM10 13l4 3-4 3-4-3z" /></svg></TrayIcon>
        <Clock>6:17 PM<br />3/31/2021</Clock>
        <NotifyBtn>
          <svg width="21" height="17" viewBox="0 0 20 20" preserveAspectRatio="none"><path d="M0 0h20v16H6l-3 4v-4H0z" fill="#000" /><path d="M4 4h12M4 8h12M4 12h12" stroke="#fff" /></svg>
          <NotifyBadge>13</NotifyBadge>
        </NotifyBtn>
      </Tray>
    </TaskBar>
  </Page>
);

export default App;
